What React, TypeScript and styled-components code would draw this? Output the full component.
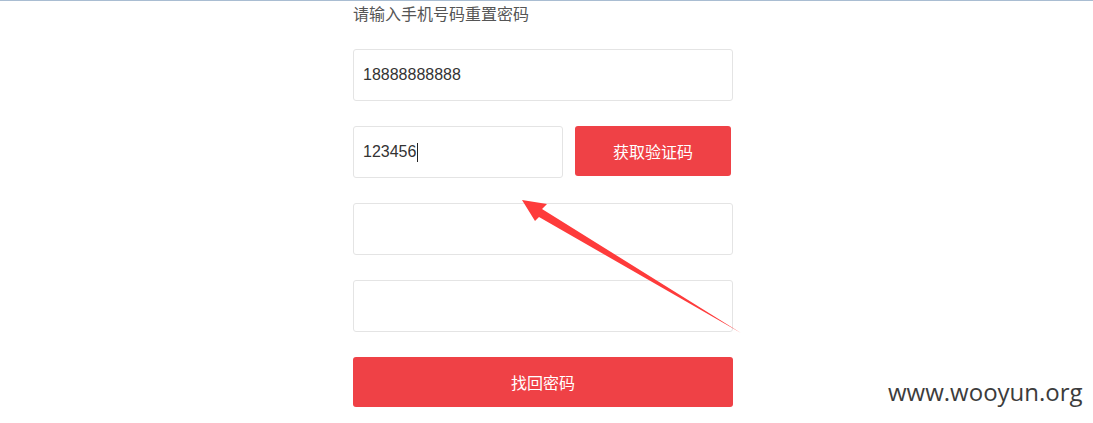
import * as React from 'react';
import styled, { createGlobalStyle } from 'styled-components';

const GlobalStyle = createGlobalStyle`
  html, body {
    margin: 0;
    padding: 0;
    background: #fff;
  }
  body {
    font-family: "Liberation Sans", "Noto Sans CJK SC", sans-serif;
  }
`;

const Page = styled.div`
  position: relative;
  width: 1093px;
  height: 423px;
  overflow: hidden;
  border-top: 1px solid #a9bdd2;
  box-sizing: border-box;
`;

const Form = styled.div`
  display: flex;
  flex-direction: column;
  gap: 25px;
  width: 380px;
  margin-left: 353px;
  padding-top: 3px;
`;

const Title = styled.div`
  font-size: 16px;
  line-height: 22px;
  color: #555;
  margin-bottom: -2px;
`;

const Row = styled.div`
  display: flex;
  align-items: flex-start;
  gap: 12px;
`;

const Field = styled.div<{ $width?: number }>`
  box-sizing: border-box;
  width: ${(p) => (p.$width ? p.$width + 'px' : '100%')};
  height: 52px;
  border: 1px solid #e4e4e4;
  border-radius: 3px;
  padding: 0 9px;
  display: flex;
  align-items: center;
  font-size: 16px;
  color: #333;
  background: #fff;
`;

const Caret = styled.span`
  display: inline-block;
  width: 1px;
  height: 19px;
  margin-left: 1px;
  background: #222;
`;

const RedButton = styled.button<{ $width: number }>`
  box-sizing: border-box;
  width: ${(p) => p.$width}px;
  height: 50px;
  border: none;
  border-radius: 3px;
  background: #ef4146;
  color: #fff;
  font-family: "Liberation Sans", "Noto Sans CJK SC", sans-serif;
  font-size: 16px;
  padding: 0;
  cursor: pointer;
`;

const Arrow = styled.svg`
  position: absolute;
  left: 0;
  top: 0;
  pointer-events: none;
`;

const Watermark = styled.div`
  position: absolute;
  left: 888px;
  top: 375px;
  font-family: "Open Sans", sans-serif;
  font-size: 24px;
  line-height: 32px;
  color: #3c3c3c;
`;

export default function App() {
  return (
    <Page>
      <GlobalStyle />
      <Form>
        <Title>请输入手机号码重置密码</Title>
        <Field>18888888888</Field>
        <Row>
          <Field $width={210}>
            123456
            <Caret />
          </Field>
          <RedButton $width={156}>获取验证码</RedButton>
        </Row>
        <Field />
        <Field />
        <RedButton $width={380}>找回密码</RedButton>
      </Form>
      <Arrow width="1093" height="423" viewBox="0 0 1093 423">
        <polygon
          points="522,199 547,203 542,208 741,332 539,216 535,220"
          fill="#fe3b3b"
        />
      </Arrow>
      <Watermark>www.wooyun.org</Watermark>
    </Page>
  );
}
